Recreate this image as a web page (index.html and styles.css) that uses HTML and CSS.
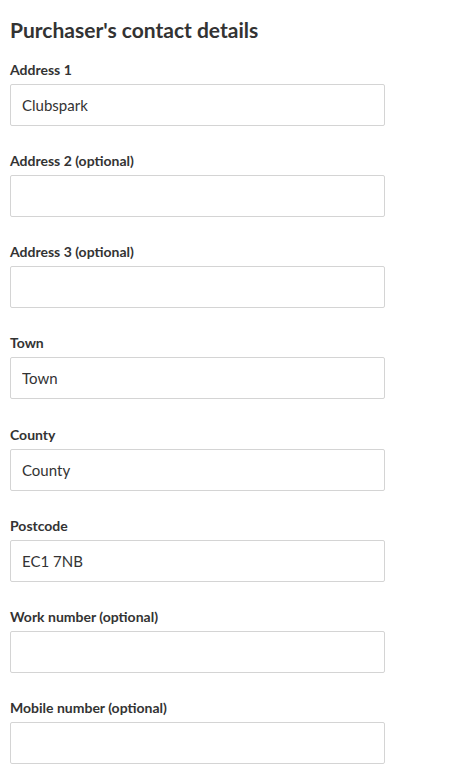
FILE: index.html
```html
<!DOCTYPE html>
<html>
<head>
    <title>Purchaser's contact details</title>
    <link rel="stylesheet" href="styles.css">
</head>
<body>
    <form class="contact-form">
        <h2>Purchaser's contact details</h2>

        <div class="field">
            <label for="address1">Address 1</label>
            <input type="text" id="address1" value="Clubspark">
        </div>
        <div class="field">
            <label for="address2">Address 2 (optional)</label>
            <input type="text" id="address2">
        </div>
        <div class="field">
            <label for="address3">Address 3 (optional)</label>
            <input type="text" id="address3">
        </div>
        <div class="field">
            <label for="town">Town</label>
            <input type="text" id="town" value="Town">
        </div>
        <div class="field">
            <label for="county">County</label>
            <input type="text" id="county" value="County">
        </div>
        <div class="field">
            <label for="postcode">Postcode</label>
            <input type="text" id="postcode" value="EC1 7NB">
        </div>
        <div class="field">
            <label for="work">Work number (optional)</label>
            <input type="tel" id="work">
        </div>
        <div class="field">
            <label for="mobile">Mobile number (optional)</label>
            <input type="tel" id="mobile">
        </div>
    </form>
</body>
</html>
```

FILE: styles.css
```css
body {
    font-family: Lato, "Open Sans", sans-serif;
    color: #333;
    background: #fff;
    margin: 0;
    padding: 0 10px;
}

.contact-form {
    width: 375px;
}

h2 {
    font-size: 21px;
    font-weight: 700;
    margin: 0;
    padding-top: 17px;
    line-height: 26px;
    margin-bottom: 18px;
}

.field {
    display: flex;
    flex-direction: column;
    margin-bottom: 26.15px;
}

label {
    font-size: 14px;
    font-weight: 700;
    line-height: 18px;
    margin-bottom: 5px;
}

input {
    box-sizing: border-box;
    height: 42px;
    width: 100%;
    padding: 0 11px;
    font-family: Lato, "Open Sans", sans-serif;
    font-size: 15px;
    color: #333;
    border: 1px solid #d4d4d4;
    border-radius: 2px;
    background: #fff;
    outline: none;
}
```
